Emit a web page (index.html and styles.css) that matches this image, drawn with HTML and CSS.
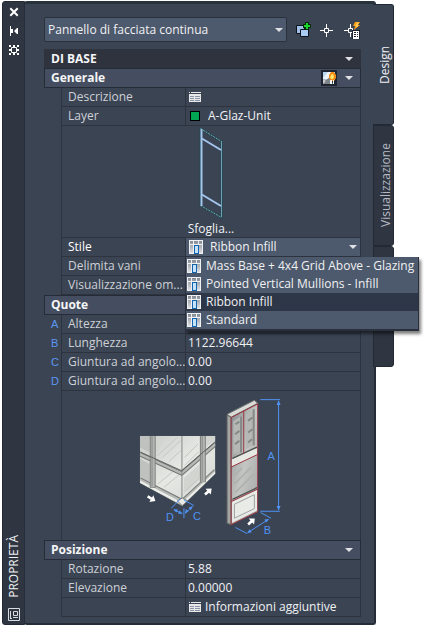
FILE: index.html
```html
<!DOCTYPE html>
<html lang="it">
<head>
    <meta charset="UTF-8">
    <meta name="viewport" content="width=device-width, initial-scale=1.0">
    <title>Proprietà</title>
    <link rel="stylesheet" href="styles.css">
</head>
<body>
    <!-- Shared icons -->
    <svg class="icon-defs" aria-hidden="true">
        <symbol id="icon-sheet" viewBox="0 0 12 12">
            <path fill="#e8e8e8" d="M0 1h12v10H0z"/>
            <path fill="#3b4453" d="M1 1h1v1H1zM0 2h12v1H0z"/>
            <path fill="#8a93a5" d="M1 5h4v1H1zM6 5h5v1H6zM1 7h4v1H1zM6 7h5v1H6zM1 9h4v1H1zM6 9h5v1H6z"/>
        </symbol>
        <linearGradient id="style-glass" x1="0" y1="0" x2="0" y2="1">
            <stop offset="0" stop-color="#858b95"/>
            <stop offset="1" stop-color="#dcdee1"/>
        </linearGradient>
        <symbol id="icon-style" viewBox="0 0 14 14">
            <path fill="#2a303b" d="M0 0h14v14H0z"/>
            <path fill="#f0f1f2" d="M0 0h14v14H0z"/>
            <path fill="url(#style-glass)" d="M1 1h3v3H1zM5 1h4v3H5zM10 1h3v3h-3zM1 5h3v8H1zM10 5h3v8h-3z"/>
            <path fill="#1263ad" d="M5 5h5v9H5z"/>
            <path fill="#c4e2fa" d="M6 6h3v7H6z"/>
        </symbol>
    </svg>

    <div class="palette">
        <!-- Title bar -->
        <header class="title-bar">
            <button type="button" class="title-btn" aria-label="Chiudi">
                <svg width="10" height="10" viewBox="0 0 10 10"><path d="M2 2l6 6M8 2L2 8" stroke="#fff" stroke-width="2" stroke-linecap="square"/></svg>
            </button>
            <button type="button" class="title-btn" aria-label="Nascondi automaticamente">
                <svg width="10" height="10" viewBox="0 0 10 10"><path fill="#fff" d="M1 0h1v10H1zM2 3h2v4H2zM8 2v6L5 5zM8 2h1v6H8z"/></svg>
            </button>
            <button type="button" class="title-btn" aria-label="Opzioni">
                <svg width="10" height="10" viewBox="0 0 10 10" fill="#fff">
                    <path d="M0 0h2v2H0zM8 0h2v2H8zM0 8h2v2H0zM8 8h2v2H8zM4 0h2v2H4zM4 8h2v2H4zM0 4h2v2H0zM8 4h2v2H8z"/>
                    <path d="M2.500 2.500h5v5h-5z" fill="none" stroke="#fff"/>
                </svg>
            </button>
            <h1 class="title">PROPRIETÀ</h1>
            <svg class="title-logo" width="12" height="13" viewBox="0 0 12 13" fill="none" stroke="#d8dbe0">
                <path d="M.5.5h11v12H.5zM2.5 3v7.500M2 10.500h2M5.500 3.500h4v4h-4zM5 9.500h5"/>
            </svg>
        </header>

        <main class="content">
            <div class="toolbar">
                <div class="combo object-type">
                    <select aria-label="Tipo di oggetto">
                        <option>Pannello di facciata continua</option>
                    </select>
                </div>
                <button type="button" class="tool-btn" aria-label="Aggiungi alla selezione">
                    <svg width="16" height="16" viewBox="0 0 16 16">
                        <path d="M1.500 3.500h8v8h-8z" fill="#9dbfe8" stroke="#0d131c"/>
                        <path d="M5.500 7.500h8v7h-8z" fill="#a9cdf2" stroke="#0d131c"/>
                        <path d="M10 0h4v2h2v4h-2v2h-4V6H8V2h2z" fill="#05290c"/>
                        <path d="M11 1h2v2h2v2h-2v2h-2V5H9V3h2z" fill="#19d62b"/>
                    </svg>
                </button>
                <button type="button" class="tool-btn" aria-label="Seleziona oggetti">
                    <svg width="16" height="16" viewBox="0 0 16 16" fill="none" stroke="#fff">
                        <path d="M7.500 2v4M7.500 11v4M1 8.500h4M10 8.500h4M5.500 6.500h4v4h-4z"/>
                    </svg>
                </button>
                <button type="button" class="tool-btn" aria-label="Selezione rapida">
                    <svg width="18" height="18" viewBox="0 0 18 18">
                        <path d="M7.500 3v4M7.500 12v4M1 9.500h4M10 9.500h3M5.500 7.500h4v4h-4z" fill="none" stroke="#fff"/>
                        <path d="M12 1h5l-2 3h2l-6 5 1-4h-2z" fill="#ffa41c"/>
                        <path d="M14 2h1l-2 3h2" fill="none" stroke="#ffe27a"/>
                        <path d="M9 9h8v9H9z" fill="#1f2530"/>
                        <path d="M10 10h6v8h-6z" fill="#fff"/>
                        <path d="M11 11h2v1h-2zM14 11h1v1h-1zM11 13h2v1h-2zM14 13h1v1h-1zM11 15h2v1h-2zM14 15h1v1h-1z" fill="#1f2530"/>
                    </svg>
                </button>
            </div>

            <form class="properties">
                <h2 class="section-title">DI BASE <span class="arrow"></span></h2>

                <!-- Generale -->
                <h3 class="group-title">Generale
                    <button type="button" class="render-btn" aria-label="Anteprima materiale">
                        <svg width="16" height="16" viewBox="0 0 16 16">
                            <path fill="#1f2530" d="M0 0h16v16H0z"/>
                            <path fill="#b8d8f2" d="M2 2h12v8H2z"/>
                            <path fill="#eef4f8" d="M2 8l5-6h5v7H2z"/>
                            <path fill="#7d8287" d="M2 9l3 1 4-3 3 7H2z"/>
                            <path fill="#c9cbcd" d="M2 9l3 2-3 3z"/>
                            <path fill="#f58a16" d="M10 2h3l2 3v3l-2 3h-3L8 8V5z"/>
                            <path fill="#ffe66b" d="M11 4h1l1 3-1 2h-2L9 7z"/>
                            <path fill="#f4f4f4" d="M9 10h2v4H9zM12 10h1v4h-1z"/>
                        </svg>
                    </button>
                    <span class="arrow"></span>
                </h3>
                <div class="row">
                    <span class="label">Descrizione</span>
                    <div class="value">
                        <button type="button" class="sheet-btn" aria-label="Modifica descrizione"><svg width="12" height="12"><use href="#icon-sheet"/></svg></button>
                    </div>
                </div>
                <div class="row">
                    <label class="label" for="layer">Layer</label>
                    <div class="value layer-value">
                        <span class="swatch"></span>
                        <input type="text" id="layer" value="A-Glaz-Unit">
                    </div>
                </div>
                <div class="row">
                    <div class="preview">
                        <svg width="24" height="94" viewBox="0 0 24 94" fill="none">
                            <path d="M1.500 1.500l21 13v76l-21-12z" stroke="#1f4a52" stroke-width="2"/>
                            <path d="M1.500 1.500l21 13M1.500 78.500l21 12" stroke="#7ba3ad" stroke-dasharray="2 1"/>
                            <path d="M22.500 14v76" stroke="#6d9fb5"/>
                            <path d="M2.500 2v77M2 11l20 12M2 67l20 12" stroke="#a3c5ec" stroke-width="2"/>
                        </svg>
                        <button type="button" class="browse-btn">Sfoglia...</button>
                    </div>
                </div>
                <div class="row">
                    <label class="label strong" for="style">Stile</label>
                    <div class="value style-value combo">
                        <svg width="14" height="14"><use href="#icon-style"/></svg>
                        <select id="style">
                            <option>Ribbon Infill</option>
                        </select>
                        <ul class="menu" role="listbox" aria-label="Stile">
                            <li role="option"><svg width="14" height="14"><use href="#icon-style"/></svg>Mass Base + 4x4 Grid Above - Glazing</li>
                            <li role="option"><svg width="14" height="14"><use href="#icon-style"/></svg>Pointed Vertical Mullions - Infill</li>
                            <li role="option" class="selected" aria-selected="true"><svg width="14" height="14"><use href="#icon-style"/></svg>Ribbon Infill</li>
                            <li role="option"><svg width="14" height="14"><use href="#icon-style"/></svg>Standard</li>
                        </ul>
                    </div>
                </div>
                <div class="row">
                    <label class="label" for="bounds">Delimita vani</label>
                    <div class="value"><input type="text" id="bounds"></div>
                </div>
                <div class="row">
                    <label class="label" for="shadow">Visualizzazione om...</label>
                    <div class="value"><input type="text" id="shadow"></div>
                </div>

                <!-- Quote -->
                <h3 class="group-title">Quote <span class="arrow"></span></h3>
                <div class="row">
                    <span class="key">A</span>
                    <label class="label" for="height">Altezza</label>
                    <div class="value"><input type="text" id="height"></div>
                </div>
                <div class="row">
                    <span class="key">B</span>
                    <label class="label" for="length">Lunghezza</label>
                    <div class="value"><input type="text" id="length" value="1122.96644"></div>
                </div>
                <div class="row">
                    <span class="key">C</span>
                    <label class="label" for="start-miter">Giuntura ad angolo...</label>
                    <div class="value"><input type="text" id="start-miter" value="0.00"></div>
                </div>
                <div class="row">
                    <span class="key">D</span>
                    <label class="label" for="end-miter">Giuntura ad angolo...</label>
                    <div class="value"><input type="text" id="end-miter" value="0.00"></div>
                </div>
                <div class="row">
                    <div class="diagram">
                        <svg viewBox="-177 0 897 450">
                            <defs>
                                <linearGradient id="glass" x1="0" y1="0" x2="1" y2="1">
                                    <stop offset="0" stop-color="#c9cbc8"/>
                                    <stop offset=".5" stop-color="#e6e8e4"/>
                                    <stop offset="1" stop-color="#cfd1cd"/>
                                </linearGradient>
                                <linearGradient id="pane" x1="0" y1="0" x2="1" y2="1">
                                    <stop offset="0" stop-color="#85898a"/>
                                    <stop offset=".5" stop-color="#c3c6c3"/>
                                    <stop offset="1" stop-color="#a0a3a2"/>
                                </linearGradient>
                                <clipPath id="corner"><path d="M57 135h228v115L185 347 57 278z"/></clipPath>
                                <path id="white-arrow" d="M-13-4H0v-8l14 12L0 12V4h-13z" fill="#fff"/>
                            </defs>

                            <!-- Corner of the wall -->
                            <g clip-path="url(#corner)">
                                <path d="M57 135h228v115L185 347 57 278z" fill="url(#glass)"/>
                                <path d="M57 135h30v50l-30-16zM57 204l30 16v56l-30-16z" fill="#bfc1be"/>
                                <path d="M106 195v-60h24zM255 170v-35h30v14zM190 262l48-42v44l-48 45z" fill="#d2d4d0"/>
                                <path d="M62 165l28-24M110 195l60-55M125 200l54-50M145 212l35-32M112 280l50-42M130 290l46-38M192 200l40-40M192 225l42-42M196 300l38-36" stroke="#c4c6c2" stroke-width="3"/>
                                <path d="M57 190l126 58 102-88M57 266l128 66 100-92" fill="none" stroke="#727674" stroke-width="13"/>
                                <path d="M57 190l126 58 102-88M57 266l128 66 100-92" fill="none" stroke="#b5b8b4" stroke-width="7"/>
                                <path d="M57 272l128 67 100-94" fill="none" stroke="#eef0ec" stroke-width="6"/>
                                <path d="M96 135v156M247 135v140" stroke="#7d817f" stroke-width="18"/>
                                <path d="M96 135v154M247 135v138" stroke="#b3b6b3" stroke-width="12"/>
                                <path d="M94 135v152M245 135v136" stroke="#737775" stroke-width="2"/>
                                <path d="M184 135v205" stroke="#858986" stroke-width="3"/>
                                <path d="M57 183l126 57 102-88M57 278l128 69 100-97" fill="none" stroke="#595d5c" stroke-width="3"/>
                                <path d="M170 331l15-9 16 9-16 14z" fill="#e9e9e5" stroke="#777b78" stroke-width="3"/>
                            </g>
                            <use href="#white-arrow" transform="translate(92 324) rotate(30)"/>
                            <use href="#white-arrow" transform="translate(263 303) rotate(-42)"/>

                            <!-- Single panel -->
                            <path d="M320 70l82-42 10 8v328l-80 38-12-4z" fill="#8f9391"/>
                            <path d="M332 80l80-42v324l-80 40z" fill="url(#pane)"/>
                            <path d="M320 70l82-42 10 9-80 42z" fill="#d9dbd7" stroke="#6c706e" stroke-width="3"/>
                            <path d="M320 72l12 8v322l-12-4z" fill="#a3a6a3" stroke="#646967" stroke-width="3"/>
                            <path d="M339 190V90l24-14v104zM377 174V70l25-15v107z" fill="#b5b8b5"/>
                            <path d="M362 77v108M400 55v108M345 100l12-8M344 130l13-10M344 160l13-10M383 90l13-10M383 125l13-10M383 155l12-10" stroke="#858987" stroke-width="6"/>
                            <path d="M342 280l50-50M345 305l55-55M342 255l24-24" stroke="#aeb1ae" stroke-width="5"/>
                            <path d="M334 206l76-34v20l-76 36z" fill="#e6e8e4"/>
                            <path d="M335 334l75-36v62l-75 36z" fill="#e9ebe7"/>
                            <path d="M342 341l60-29v42l-60 29z" fill="none" stroke="#9da09d" stroke-width="3"/>
                            <path d="M336 203l74-34M336 326l74-35" stroke="#4e5351" stroke-width="4"/>
                            <path d="M332 80l80-41v324l-80 39zM370 60v128M332 229l80-38M332 333l80-38" fill="none" stroke="#9a3640" stroke-width="3"/>
                            <use href="#white-arrow" transform="translate(393 393) rotate(-42)"/>

                            <!-- Dimensions -->
                            <g fill="none" stroke="#4f93f5" stroke-width="3">
                                <path d="M420 26h59M420 362h59M475 30v328"/>
                                <path d="M345 411l35 18M421 366l31 17M384 425l60-38"/>
                                <path d="M190 353v30M152 353l28-29M190 328l30 17M160 358l25 11M195 368l20-20"/>
                            </g>
                            <path d="M475 28l6 14h-12zM475 360l6-14h-12zM380 428l8-12 6 9zM446 385l-14 2 6 9zM158 356l14 1-5 9zM186 370l-14-1 5-9zM193 369l3-14 8 7zM217 347l-13 4 7 8z" fill="#4f93f5"/>
                            <text x="453" y="207" text-anchor="middle">A</text>
                            <text x="441" y="430" text-anchor="middle">B</text>
                            <text x="229" y="389" text-anchor="middle">C</text>
                            <text x="148" y="392" text-anchor="middle">D</text>
                        </svg>
                    </div>
                </div>

                <!-- Posizione -->
                <h3 class="group-title">Posizione <span class="arrow"></span></h3>
                <div class="row">
                    <label class="label" for="rotation">Rotazione</label>
                    <div class="value"><input type="text" id="rotation" value="5.88"></div>
                </div>
                <div class="row">
                    <label class="label" for="elevation">Elevazione</label>
                    <div class="value"><input type="text" id="elevation" value="0.00000"></div>
                </div>
                <div class="row">
                    <span class="label"></span>
                    <div class="value">
                        <button type="button" class="sheet-btn"><svg width="12" height="12"><use href="#icon-sheet"/></svg>Informazioni aggiuntive</button>
                    </div>
                </div>
            </form>
        </main>

        <!-- Side tabs -->
        <nav class="tabs">
            <button type="button" class="tab active">Design</button>
            <button type="button" class="tab">Visualizzazione</button>
            <button type="button" class="tab last">Dati estesi</button>
        </nav>
    </div>
</body>
</html>
```
FILE: styles.css
```css
* {
    margin: 0;
    padding: 0;
    box-sizing: border-box;
}

body {
    padding: 1px 43px 0 2px;
    background: #fff;
    font-family: 'Open Sans', 'Noto Sans', sans-serif;
    font-size: 12px;
    line-height: 18px;
    color: #f0f1f3;
}

svg {
    display: block;
    flex-shrink: 0;
}

button,
input,
select {
    border: none;
    background: none;
    font: inherit;
    color: inherit;
}

.icon-defs {
    position: absolute;
    width: 0;
    height: 0;
}

.palette {
    display: flex;
}

/* Title bar */
.title-bar {
    display: flex;
    flex-direction: column;
    align-items: center;
    width: 23px;
    padding: 4px 0 3px;
    background: #2f3541;
    border: 1px solid #232a35;
    border-radius: 3px 0 0 3px;
}

.title-btn {
    display: flex;
    align-items: center;
    height: 19px;
    padding-bottom: 8px;
}

.title {
    margin-top: auto;
    margin-bottom: 11px;
    writing-mode: vertical-rl;
    transform: rotate(180deg);
    font-size: 12px;
    font-weight: 400;
}

/* Main panel */
.content {
    flex: 1;
    min-width: 0;
    padding: 13px 13px 6px 19px;
    background: #3b4453;
    border: 1px solid #262d38;
    border-top: 3px solid #28323b;
    border-right-width: 2px;
    border-bottom-width: 2px;
    border-radius: 3px;
    margin-left: -1px;
}

.toolbar {
    display: flex;
    align-items: center;
    margin-bottom: 7px;
}

.combo {
    position: relative;
    display: flex;
    align-items: center;
    background: #4d596c;
}

.combo select {
    appearance: none;
    flex: 1;
    min-width: 0;
    height: 100%;
    outline: none;
}

.combo::after,
.arrow {
    content: '';
    border: 4px solid transparent;
    border-top-color: #dfe1e4;
    border-bottom: none;
}

.object-type {
    flex: 1;
    height: 25px;
    padding: 0 3px;
    border: 1px solid #2a313c;
    border-radius: 2px;
}

.tool-btn {
    margin-left: 8px;
}

/* Property list */
.section-title,
.group-title {
    display: flex;
    align-items: center;
    height: 20px;
    padding: 0 7px 0 6px;
    font-size: 12px;
    font-weight: 700;
    background: #454e60;
    border: 1px solid #252c37;
    color: #f5f6f7;
}

.section-title {
    height: 19px;
    background: #2e333e;
    border-color: #2e333e;
}

.arrow {
    margin-left: auto;
}

.render-btn {
    margin-left: auto;
}

.render-btn + .arrow {
    margin-left: 8px;
}

.row {
    display: grid;
    grid-template-columns: 17px 124px 1fr;
    min-height: 19px;
}

.key {
    padding-left: 7px;
    font-family: 'Liberation Sans', sans-serif;
    font-size: 11px;
    color: #5b98f5;
}

.label {
    grid-column: 2;
    padding-left: 6px;
    border-left: 1px solid #2d3440;
    border-bottom: 1px solid #2d3440;
    color: #cdd1d7;
    white-space: nowrap;
    overflow: hidden;
}

.label.strong {
    color: #fff;
}

.value {
    grid-column: 3;
    display: flex;
    align-items: center;
    min-width: 0;
    padding-left: 2px;
    border: 1px solid #2d3440;
    border-top: none;
}

.value input {
    width: 100%;
    min-width: 0;
    height: 18px;
    outline: none;
}

.sheet-btn {
    display: flex;
    align-items: center;
    gap: 4px;
    height: 18px;
    padding-left: 1px;
}

.layer-value {
    gap: 8px;
    padding-left: 4px;
}

.swatch {
    flex-shrink: 0;
    width: 10px;
    height: 10px;
    background: #00a651;
    border: 1px solid #000;
}

.preview,
.diagram {
    grid-column: 2 / 4;
    border: 1px solid #2d3440;
    border-top: none;
}

.preview {
    display: flex;
    flex-direction: column;
    align-items: center;
    padding-top: 1px;
    height: 112px;
}

.browse-btn {
    height: 16px;
    line-height: 16px;
}

.diagram {
    border-bottom: none;
}

.diagram svg {
    width: 100%;
}

.diagram text {
    font-family: 'Liberation Sans', sans-serif;
    font-size: 33px;
    fill: #4f93f5;
}

/* Style drop-down */
.style-value {
    gap: 7px;
    padding: 0 3px;
}

.menu {
    position: absolute;
    top: 19px;
    left: -1px;
    z-index: 10;
    list-style: none;
    background: #4d596c;
    border: 1px solid #2a313d;
    border-top: none;
    border-bottom-width: 2px;
    box-shadow: 2px 3px 3px rgba(0, 0, 0, 0.5);
}

.menu li {
    display: flex;
    align-items: center;
    gap: 5px;
    height: 18px;
    padding: 0 4px 0 1px;
    white-space: nowrap;
}

.menu .selected {
    background: #2e3747;
}

/* Side tabs */
.tabs {
    width: 21px;
    margin-left: -3px;
    padding-top: 3px;
}

.tab {
    display: block;
    width: 100%;
    height: 121px;
    padding-right: 3px;
    writing-mode: vertical-rl;
    transform: rotate(180deg);
    background: #2f3541;
    border: 1px solid #222934;
    border-radius: 3px 0 0 3px;
    color: #b4b9c2;
}

.tab.active {
    background: #3b4453;
    border-right: none;
    color: #f0f1f3;
}

.tab.last {
    padding-top: 34px;
    text-align: start;
}
```
